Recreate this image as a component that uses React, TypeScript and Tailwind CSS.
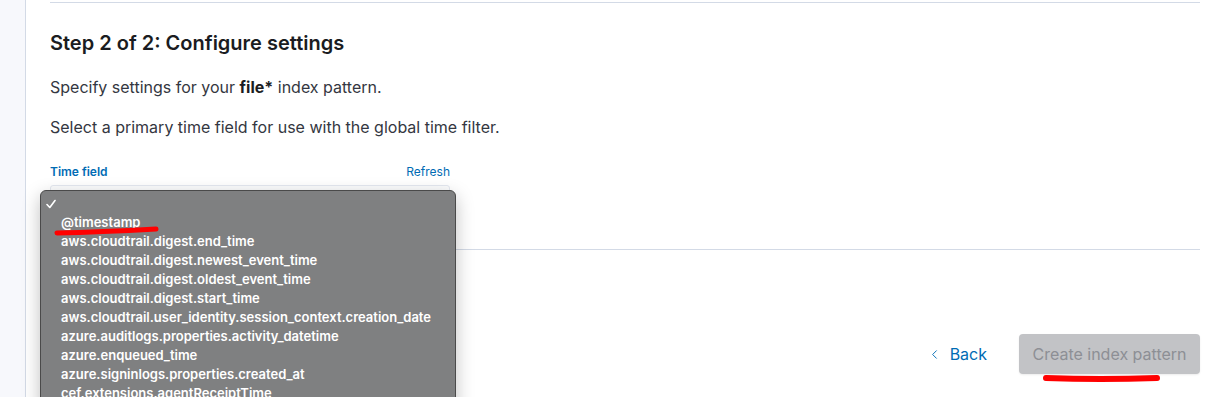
import React from 'react';
import { ChevronLeft } from 'lucide-react';

const fields = [
    '',
    '@timestamp',
    'aws.cloudtrail.digest.end_time',
    'aws.cloudtrail.digest.newest_event_time',
    'aws.cloudtrail.digest.oldest_event_time',
    'aws.cloudtrail.digest.start_time',
    'aws.cloudtrail.user_identity.session_context.creation_date',
    'azure.auditlogs.properties.activity_datetime',
    'azure.enqueued_time',
    'azure.signinlogs.properties.created_at',
    'cef.extensions.agentReceiptTime',
];

const App: React.FC = () => {
    return (
        <div className="relative flex h-[397px] w-[1212px] overflow-hidden bg-white font-['Inter',sans-serif]">
            {/* Side gutter */}
            <div className="w-[26px] shrink-0 border-r border-[#d3dae6] bg-[#f7f8fc]" />

            {/* Main panel */}
            <div className="flex-1 pl-[24px] pr-[12px]">
                <div className="mt-[2px] border-t border-[#d3dae6]" />

                <h2 className="mt-[26px] text-[20px] leading-[28px] font-semibold text-[#1a1c21]">
                    Step 2 of 2: Configure settings
                </h2>
                <p className="mt-[18px] text-[16px] leading-[24px] text-[#343741]">
                    Specify settings for your <strong className="font-bold text-[#1a1c21]">file*</strong> index pattern.
                </p>
                <p className="mt-[16px] text-[16px] leading-[24px] text-[#343741]">
                    Select a primary time field for use with the global time filter.
                </p>

                {/* Time field */}
                <div className="mt-[25px] w-[400px]">
                    <div className="flex items-center justify-between text-[12px] leading-[16px]">
                        <span className="font-semibold text-[#006bb4]">Time field</span>
                        <span className="text-[#006bb4]">Refresh</span>
                    </div>
                    <div className="mt-[5px] h-[40px] rounded-[3px] border border-[#e4e8f0] bg-[#fbfcfd]" />
                </div>

                <div className="mt-[24px] border-t border-[#d3dae6]" />

                {/* Footer */}
                <div className="mt-[84px] flex items-center justify-end gap-[32px]">
                    <button className="flex items-center gap-[8px] text-[16px] text-[#006bb4]">
                        <ChevronLeft className="h-[15px] w-[15px]" strokeWidth={1.5} />
                        Back
                    </button>
                    <button className="h-[40px] w-[181px] rounded-[4px] bg-[#c2c3c6] text-[16px] text-[#8d8f95] shadow-[0_1px_2px_rgba(0,0,0,0.08)]">
                        Create index pattern
                    </button>
                </div>
            </div>

            {/* Native select menu */}
            <div className="absolute left-[40px] top-[190px] h-[230px] w-[416px] rounded-[6px] border border-[#4a4a4a] bg-[#7f8081] pt-[3px] shadow-[0_6px_18px_rgba(0,0,0,0.25)]">
                {fields.map((f, i) => (
                    <div key={i} className="relative h-[19px] pl-[20px] text-[13px] leading-[19px] font-semibold text-white">
                        {i === 0 && (
                            <svg className="absolute left-[5px] top-[5px]" width="10" height="10" viewBox="0 0 10 10">
                                <path d="M1 5.5 L3.8 8.5 L9 1.5" stroke="white" strokeWidth="1.6" fill="none" strokeLinecap="round" strokeLinejoin="round" />
                            </svg>
                        )}
                        {f}
                    </div>
                ))}
            </div>

            {/* Red annotations */}
            <svg className="absolute left-0 top-0" width="1212" height="397">
                <path d="M57 233 Q100 232 156 229" stroke="#ff0000" strokeWidth="5" strokeLinecap="round" fill="none" />
                <path d="M1046 378 Q1100 380 1157 378" stroke="#ff0000" strokeWidth="6" strokeLinecap="round" fill="none" />
            </svg>
        </div>
    );
};

export default App;
